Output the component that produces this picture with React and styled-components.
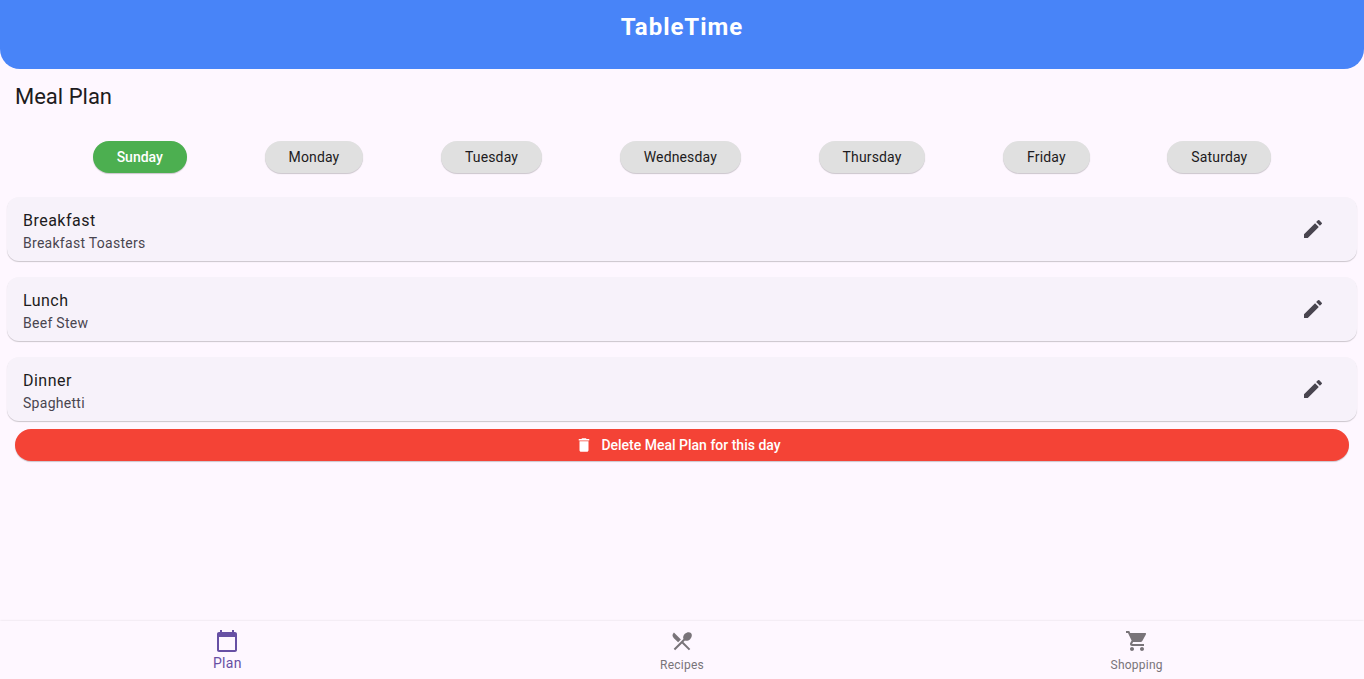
import React, { useState } from "react";
import styled, { createGlobalStyle, css, ThemeProvider } from "styled-components";
import {
  MdCalendarToday,
  MdDelete,
  MdEdit,
  MdRestaurantMenu,
  MdShoppingCart,
} from "react-icons/md";

const theme = {
  background: "#fef7ff",
  surface: "#f7f2fa",
  brand: "#4884f8",
  text: "#1d1b20",
  textMuted: "#49454f",
  selected: "#4caf50",
  chip: "#e0e0e0",
  danger: "#f44336",
  navActive: "#6750a4",
  navIdle: "#797479",
  tracking: { label: "0.01em", body: "0.02em", wide: "0.03em", title: "0.04em" },
};

const GlobalStyle = createGlobalStyle`
  *, *::before, *::after { box-sizing: border-box; }
  body {
    margin: 0;
    background: ${theme.background};
    color: ${theme.text};
    font-family: Roboto, "Liberation Sans", sans-serif;
  }
  button { font: inherit; border: 0; cursor: pointer; }
  h1, h2, h3, p, ul { margin: 0; padding: 0; font-weight: 400; }
  ul { list-style: none; }
`;

const Page = styled.div`
  display: flex;
  flex-direction: column;
  min-height: 100vh;
`;

const Header = styled.header`
  padding: 11px 16px 26px;
  border-radius: 0 0 20px 20px;
  background: ${({ theme }) => theme.brand};
  text-align: center;
`;

const AppTitle = styled.h1`
  color: #fff;
  font-size: 24px;
  font-weight: 700;
  line-height: 32px;
  letter-spacing: ${({ theme }) => theme.tracking.title};
`;

const Main = styled.main`
  flex: 1;
`;

const Heading = styled.h2`
  padding: 14px 15px 16px;
  font-size: 22px;
  line-height: 28px;
`;

const DayBar = styled.div`
  display: flex;
  justify-content: space-evenly;
  padding: 14px 15px 24px;
`;

const elevation = css`
  box-shadow: 0 1px 1px rgba(0, 0, 0, 0.2);
`;

const DayButton = styled.button`
  height: 32px;
  padding: 0 24px;
  border-radius: 16px;
  background: ${({ $active, theme }) => ($active ? theme.selected : theme.chip)};
  color: ${({ $active, theme }) => ($active ? "#fff" : theme.text)};
  font-size: 14px;
  font-weight: ${({ $active }) => ($active ? 500 : 400)};
  letter-spacing: ${({ $active, theme }) => ($active ? "normal" : theme.tracking.label)};
  line-height: 20px;
  ${elevation}
`;

const MealList = styled.ul`
  display: flex;
  flex-direction: column;
  gap: 16px;
  padding: 0 7px;
`;

const MealCard = styled.li`
  display: flex;
  align-items: center;
  justify-content: space-between;
  min-height: 64px;
  padding: 0 24px 0 16px;
  border-radius: 12px;
  background: ${({ theme }) => theme.surface};
  ${elevation}
`;

const MealText = styled.div`
  padding-top: 4px;
`;

const MealName = styled.h3`
  font-size: 16px;
  line-height: 24px;
  letter-spacing: ${({ theme }) => theme.tracking.wide};
`;

const MealDish = styled.p`
  color: ${({ theme }) => theme.textMuted};
  font-size: 14px;
  line-height: 20px;
  letter-spacing: ${({ theme }) => theme.tracking.body};
`;

const IconButton = styled.button`
  display: flex;
  align-items: center;
  justify-content: center;
  width: 40px;
  height: 40px;
  padding: 0;
  border-radius: 50%;
  background: transparent;
  color: ${({ theme }) => theme.textMuted};
`;

const Actions = styled.div`
  display: flex;
  padding: 8px 15px;
`;

const DeleteButton = styled.button`
  display: flex;
  flex: 1;
  align-items: center;
  justify-content: center;
  gap: 8px;
  height: 32px;
  padding: 0 24px 0 16px;
  border-radius: 16px;
  background: ${({ theme }) => theme.danger};
  color: #fff;
  font-size: 14px;
  font-weight: 500;
  line-height: 20px;
  ${elevation}
`;

const BottomNav = styled.nav`
  position: sticky;
  bottom: 0;
  display: flex;
  height: 58px;
  background: ${({ theme }) => theme.background};
  box-shadow: 0 0 2px rgba(0, 0, 0, 0.12);
`;

const NavItem = styled.a`
  display: flex;
  flex: 1;
  flex-direction: column;
  align-items: center;
  padding-top: 8px;
  color: ${({ $active, theme }) => ($active ? theme.navActive : theme.navIdle)};
  text-decoration: none;
`;

const NavLabel = styled.span`
  padding-top: ${({ $active }) => ($active ? "0" : "2px")};
  font-size: ${({ $active }) => ($active ? "14px" : "12px")};
  line-height: 20px;
  letter-spacing: ${({ theme }) => theme.tracking.body};
`;

const days = ["Sunday", "Monday", "Tuesday", "Wednesday", "Thursday", "Friday", "Saturday"];

const meals = [
  { name: "Breakfast", dish: "Breakfast Toasters" },
  { name: "Lunch", dish: "Beef Stew" },
  { name: "Dinner", dish: "Spaghetti" },
];

const tabs = [
  { label: "Plan", Icon: MdCalendarToday },
  { label: "Recipes", Icon: MdRestaurantMenu },
  { label: "Shopping", Icon: MdShoppingCart },
];

export default function App() {
  const [day, setDay] = useState("Sunday");
  const [tab, setTab] = useState("Plan");

  return (
    <ThemeProvider theme={theme}>
      <GlobalStyle />
      <Page>
        <Header>
          <AppTitle>TableTime</AppTitle>
        </Header>
        <Main>
          <Heading>Meal Plan</Heading>
          <DayBar>
            {days.map((name) => (
              <DayButton
                key={name}
                type="button"
                $active={name === day}
                aria-pressed={name === day}
                onClick={() => setDay(name)}
              >
                {name}
              </DayButton>
            ))}
          </DayBar>
          <MealList>
            {meals.map(({ name, dish }) => (
              <MealCard key={name}>
                <MealText>
                  <MealName>{name}</MealName>
                  <MealDish>{dish}</MealDish>
                </MealText>
                <IconButton type="button" aria-label={`Edit ${name}`}>
                  <MdEdit size={24} />
                </IconButton>
              </MealCard>
            ))}
          </MealList>
          <Actions>
            <DeleteButton type="button">
              <MdDelete size={18} />
              Delete Meal Plan for this day
            </DeleteButton>
          </Actions>
        </Main>
        <BottomNav>
          {tabs.map(({ label, Icon }) => (
            <NavItem
              key={label}
              href={`#${label.toLowerCase()}`}
              $active={label === tab}
              aria-current={label === tab ? "page" : undefined}
              onClick={() => setTab(label)}
            >
              <Icon size={24} />
              <NavLabel $active={label === tab}>{label}</NavLabel>
            </NavItem>
          ))}
        </BottomNav>
      </Page>
    </ThemeProvider>
  );
}
